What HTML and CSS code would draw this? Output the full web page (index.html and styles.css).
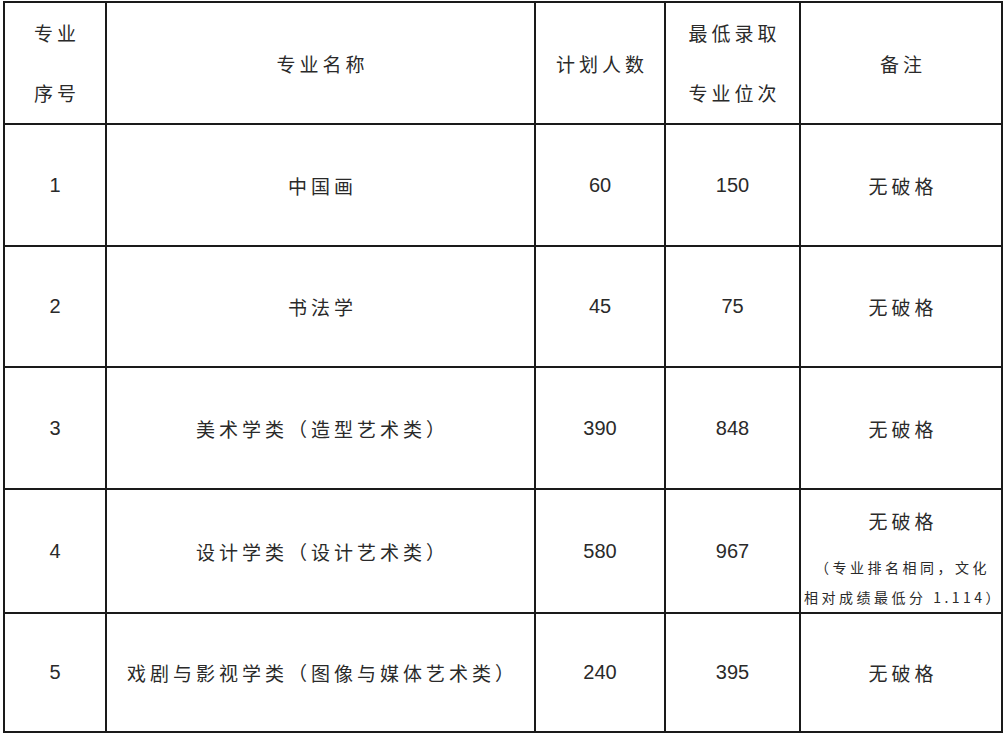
FILE: index.html
```html
<!DOCTYPE html>
<html lang="zh-CN">
<head>
<meta charset="utf-8">
<title>专业录取</title>
<link rel="stylesheet" href="styles.css">
</head>
<body>
<table class="sheet">
  <colgroup>
    <col class="c-no">
    <col class="c-name">
    <col class="c-plan">
    <col class="c-rank">
    <col class="c-note">
  </colgroup>
  <thead>
    <tr class="head">
      <th class="cjk"><div class="hl">专业</div><div class="hl">序号</div></th>
      <th class="cjk">专业名称</th>
      <th class="cjk">计划人数</th>
      <th class="cjk"><div class="hl">最低录取</div><div class="hl">专业位次</div></th>
      <th class="cjk">备注</th>
    </tr>
  </thead>
  <tbody>
    <tr class="r-1">
      <td class="num">1</td>
      <td class="cjk">中国画</td>
      <td class="num">60</td>
      <td class="num">150</td>
      <td class="cjk">无破格</td>
    </tr>
    <tr class="r-2">
      <td class="num">2</td>
      <td class="cjk">书法学</td>
      <td class="num">45</td>
      <td class="num">75</td>
      <td class="cjk">无破格</td>
    </tr>
    <tr class="r-3">
      <td class="num">3</td>
      <td class="cjk">美术学类（造型艺术类）</td>
      <td class="num">390</td>
      <td class="num">848</td>
      <td class="cjk">无破格</td>
    </tr>
    <tr class="r-4">
      <td class="num">4</td>
      <td class="cjk">设计学类（设计艺术类）</td>
      <td class="num">580</td>
      <td class="num">967</td>
      <td class="cjk note">
        <div class="note-main">无破格</div>
        <div class="note-sub">（专业排名相同，文化</div>
        <div class="note-sub">相对成绩最低分 1.114）</div>
      </td>
    </tr>
    <tr class="r-5">
      <td class="num">5</td>
      <td class="cjk">戏剧与影视学类（图像与媒体艺术类）</td>
      <td class="num">240</td>
      <td class="num">395</td>
      <td class="cjk">无破格</td>
    </tr>
  </tbody>
</table>
</body>
</html>
```

FILE: styles.css
```css
html, body {
  margin: 0;
  padding: 0;
  background: #ffffff;
}

body {
  padding: 1px 0 0 3px;
}

.sheet {
  border-collapse: collapse;
  table-layout: fixed;
  width: 998px;
}

.c-no { width: 102px; }
.c-name { width: 429px; }
.c-plan { width: 130px; }
.c-rank { width: 135px; }
.c-note { width: 202px; }

.sheet th,
.sheet td {
  border: 2px solid #1a1a1a;
  padding: 0;
  text-align: center;
  vertical-align: middle;
  font-weight: normal;
  color: #2a2a2a;
}

.head { height: 121px; }
.r-1 { height: 122px; }
.r-2 { height: 121px; }
.r-3 { height: 122px; }
.r-4 { height: 122px; }
.r-5 { height: 119px; }

.cjk {
  font-family: "Noto Sans CJK SC", "Noto Sans", sans-serif;
  font-weight: 300;
  font-size: 19px;
  letter-spacing: 4px;
  text-indent: 4px;
}

.hl {
  line-height: 60px;
}

.num {
  font-family: "Liberation Sans", Arial, sans-serif;
  font-size: 20px;
  color: #555555;
}

.note-main {
  line-height: 62px;
}

.note-sub {
  font-size: 14px;
  line-height: 30px;
  letter-spacing: 3.5px;
  text-indent: 0;
  padding-left: 3px;
}
```
